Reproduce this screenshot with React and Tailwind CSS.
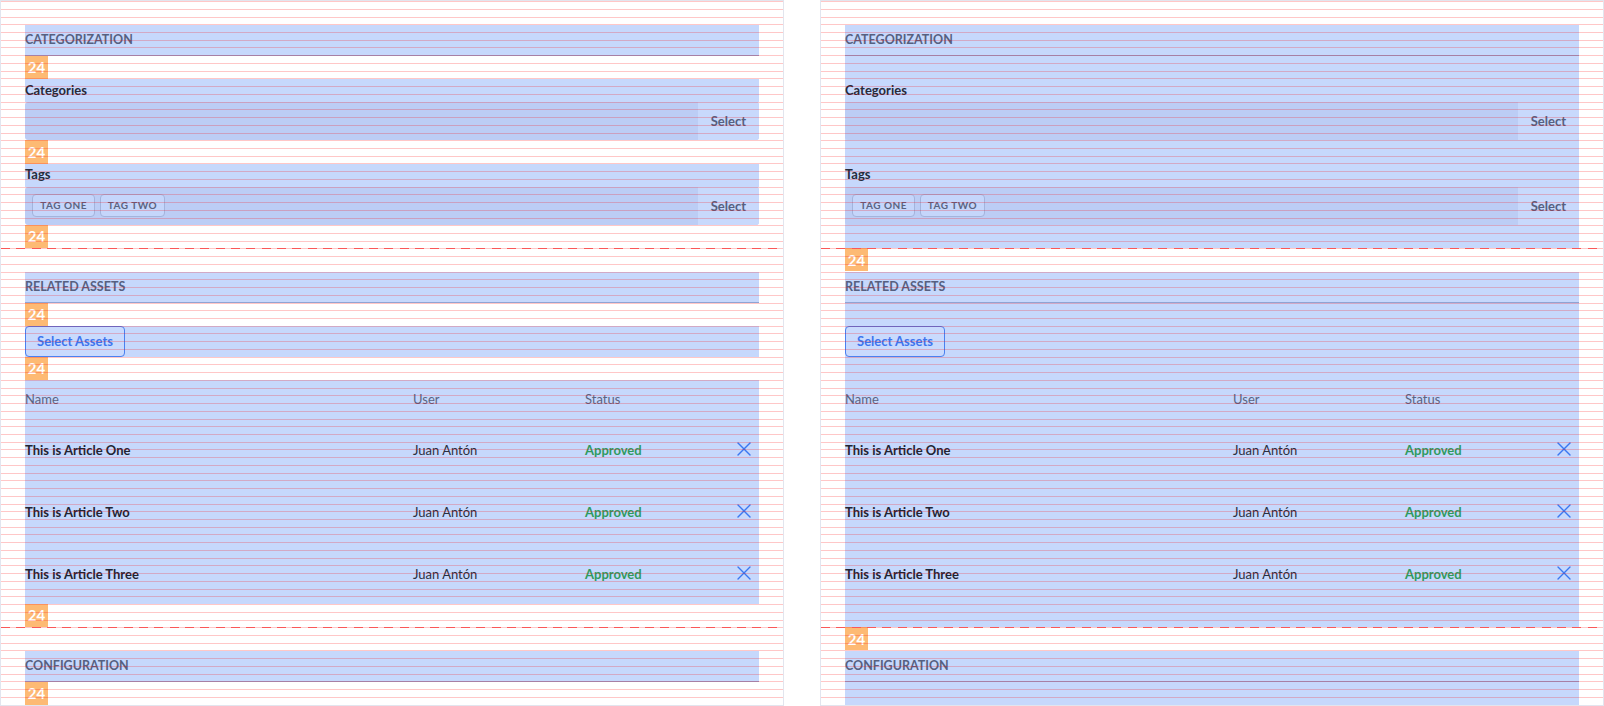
import React from 'react';

const FONT = 'font-[family-name:Lato,sans-serif]';

const rows = [
  { name: 'This is Article One', user: 'Juan Antón', status: 'Approved' },
  { name: 'This is Article Two', user: 'Juan Antón', status: 'Approved' },
  { name: 'This is Article Three', user: 'Juan Antón', status: 'Approved' },
];

function Gap({ mode }) {
  if (mode === 'section') return <div className="h-[23.33px]" />;
  return (
    <div className="h-[23.33px] flex">
      <div className="w-[23px] h-full bg-[#fdba74] text-white font-bold text-[15px] flex items-center justify-center">24</div>
    </div>
  );
}

function Header({ mode, children }) {
  return (
    <div className={`h-[30.67px] flex items-center pt-[1px] border-b border-[#8fa4d3] text-[12.5px] font-bold uppercase text-[#566080] ${mode === 'items' ? 'bg-[#c6d8fc]' : ''}`}>
      {children}
    </div>
  );
}

function Label({ mode, children }) {
  return (
    <div className={`h-[23px] flex items-center text-[13px] font-bold text-[#262b3b] ${mode === 'items' ? 'bg-[#c6d8fc]' : ''}`}>
      {children}
    </div>
  );
}

function SelectInput({ tags = [] }) {
  return (
    <div className="h-[38.33px] flex rounded-[3px] bg-[#bccdf5]">
      <div className="flex-1 flex items-center gap-[4.67px] px-[7.33px]">
        {tags.map((t) => (
          <span key={t} className="h-[22.67px] px-[7px] flex items-center rounded-[4px] border border-[#a3b4dc] bg-[#c5d6fb] text-[10px] font-bold tracking-[0.05em] uppercase text-[#5a6482]">
            {t}
          </span>
        ))}
      </div>
      <div className="w-[61.33px] pt-[1px] bg-[#c8d9fc] rounded-r-[3px] flex items-center justify-center text-[13px] font-bold text-[#566080]">Select</div>
    </div>
  );
}

function XIcon() {
  return (
    <svg width="14" height="14" viewBox="0 0 14 14" fill="none" stroke="#3b78f2" strokeWidth="1.4" strokeLinecap="round">
      <line x1="1" y1="1" x2="13" y2="13" />
      <line x1="13" y1="1" x2="1" y2="13" />
    </svg>
  );
}

function AssetsTable() {
  return (
    <div className="h-[224px] flex flex-col text-[13px]">
      <div className="h-[38.33px] pt-[2px] grid grid-cols-[388px_172px_1fr_40px] items-center text-[#5a6482]">
        <div>Name</div>
        <div>User</div>
        <div>Status</div>
        <div />
      </div>
      {rows.map((r) => (
        <div key={r.name} className="h-[61.89px] grid grid-cols-[388px_172px_1fr_40px] items-center">
          <div className="pt-[3px] font-bold text-[#1f2433]">{r.name}</div>
          <div className="pt-[3px] text-[#2b2f3e]">{r.user}</div>
          <div className="pt-[3px] font-bold text-[#2f9a5f]">{r.status}</div>
          <div className="flex justify-end pr-[8px]"><XIcon /></div>
        </div>
      ))}
    </div>
  );
}

function Divider({ mode }) {
  return (
    <>
      <div className="relative h-0 -mx-[24px]">
        <div className="absolute inset-x-0 top-0 h-px bg-[repeating-linear-gradient(to_right,#f87171_0px,#f87171_9px,transparent_9px,transparent_15.33px)]" />
      </div>
      <div className="h-[24px]">
        {mode === 'section' && (
          <div className="w-[23px] h-[23px] bg-[#fdba74] text-white font-bold text-[15px] flex items-center justify-center">24</div>
        )}
      </div>
    </>
  );
}

function Section({ mode, children, grow }) {
  return (
    <div className={`flex flex-col ${mode === 'section' ? 'bg-[#c6d8fc]' : ''} ${grow ? 'flex-1' : ''}`}>
      {children}
    </div>
  );
}

function Panel({ mode }) {
  return (
    <div className="relative w-[784px] h-[706px] shrink-0 overflow-hidden border border-[#e2e5ee] px-[24px] pt-[24px] flex flex-col">
      <Section mode={mode}>
        <Header mode={mode}>Categorization</Header>
        <Gap mode={mode} />
        <Label mode={mode}>Categories</Label>
        <SelectInput />
        <Gap mode={mode} />
        <Label mode={mode}>Tags</Label>
        <SelectInput tags={['Tag One', 'Tag Two']} />
        <Gap mode={mode} />
      </Section>
      <Divider mode={mode} />
      <Section mode={mode}>
        <Header mode={mode}>Related Assets</Header>
        <Gap mode={mode} />
        <div className={`h-[30.67px] flex ${mode === 'items' ? 'bg-[#c6d8fc]' : ''}`}>
          <button className="h-full w-[100px] pt-[1px] rounded-[4px] border border-[#4a80f0] bg-[#c9dafd] text-[13px] font-bold text-[#3d74ee]">
            Select Assets
          </button>
        </div>
        <Gap mode={mode} />
        <div className={mode === 'items' ? 'bg-[#c6d8fc]' : ''}>
          <AssetsTable />
        </div>
        <Gap mode={mode} />
      </Section>
      <Divider mode={mode} />
      <Section mode={mode} grow>
        <Header mode={mode}>Configuration</Header>
        <Gap mode={mode} />
      </Section>
      <div className="pointer-events-none absolute inset-0 bg-[repeating-linear-gradient(to_bottom,transparent_0px,transparent_0.1px,rgba(255,0,0,0.22)_0.1px,rgba(255,0,0,0.22)_1.1px,transparent_1.1px,transparent_7.73px)]" />
    </div>
  );
}

export default function App() {
  return (
    <div className={`flex gap-[36px] w-[1604px] h-[706px] overflow-hidden bg-white ${FONT}`}>
      <Panel mode="items" />
      <Panel mode="section" />
    </div>
  );
}
